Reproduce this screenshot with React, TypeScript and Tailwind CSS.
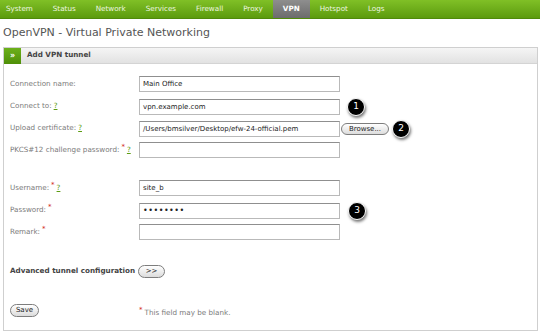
import type { ReactNode } from 'react';

const navItems = ['System', 'Status', 'Network', 'Services', 'Firewall', 'Proxy', 'VPN', 'Hotspot', 'Logs'];

function Marker({ n }: { n: number }) {
  return (
    <span className="flex h-[18px] w-[18px] items-center justify-center rounded-full border border-white bg-black text-[9px] text-white shadow-[1px_2px_3px_rgba(0,0,0,0.55)]">
      {n}
    </span>
  );
}

function Req() {
  return <span className="relative top-[-3px] ml-[2px] text-[7px] text-[#d0250f]">*</span>;
}

function Help() {
  return <span className="ml-[2px] text-[#5c9c12] underline">?</span>;
}

function Field({ value, mono }: { value?: string; mono?: boolean }) {
  return (
    <div
      className={`flex h-[16px] w-[201px] items-center border border-[#b9b9b9] border-t-[#8f8f8f] bg-white pl-[3px] text-[#222] ${
        mono ? 'tracking-[0.5px] text-[8px]' : 'text-[7px]'
      }`}
    >
      {value}
    </div>
  );
}

function Row({ label, children, className = '' }: { label: ReactNode; children: ReactNode; className?: string }) {
  return (
    <div className={`flex h-[22px] items-start ${className}`}>
      <div className="flex h-[16px] w-[129px] items-center text-[#7a7a7a]">{label}</div>
      <div className="flex items-center">{children}</div>
    </div>
  );
}

export default function App() {
  return (
    <div className="h-[335px] w-[540px] bg-white font-['DejaVu_Sans',sans-serif] text-[7.2px]">
      {/* Top navigation */}
      <div className="flex h-[19px] items-stretch border-b border-[#4f8a0a] bg-gradient-to-b from-[#80c026] to-[#5c9b0d]">
        {navItems.map((item, i) => (
          <div
            key={item}
            className={`flex items-center ${i === 0 ? 'pl-[6px] pr-[10px]' : 'px-[10px]'} ${
              item === 'VPN'
                ? 'bg-gradient-to-b from-[#8e8e8e] to-[#6c6c6c] font-bold text-white'
                : 'text-[#eef7e0]'
            }`}
          >
            {item}
          </div>
        ))}
      </div>

      {/* Title */}
      <div className="flex h-[28px] items-center pl-[3px] pt-[1px] text-[11px] text-[#555]">
        OpenVPN - Virtual Private Networking
      </div>

      {/* Panel */}
      <div className="ml-[3px] h-[284px] w-[535px] border border-[#cfcfcf]">
        <div className="flex h-[16px] items-center border-b border-[#d4d4d4] bg-gradient-to-b from-[#f5f5f5] to-[#e2e2e2]">
          <div className="flex h-[16px] w-[17px] items-center justify-center bg-gradient-to-b from-[#6cb01a] to-[#4f8f08] text-[8px] font-bold text-white">
            »
          </div>
          <span className="ml-[6px] font-bold text-[#444]">Add VPN tunnel</span>
        </div>

        <div className="pl-[6px] pt-[12px]">
          <Row label="Connection name:">
            <Field value="Main Office" />
          </Row>
          <Row label={<>Connect to:<Help /></>}>
            <Field value="vpn.example.com" />
            <span className="ml-[7px]"><Marker n={1} /></span>
          </Row>
          <Row label={<>Upload certificate:<Help /></>}>
            <Field value="/Users/bmsilver/Desktop/efw-24-official.pem" />
            <span className="ml-[1px] flex h-[12px] w-[48px] items-center justify-center rounded-full border border-[#7d7d7d] bg-gradient-to-b from-white to-[#dcdcdc] text-[7px] text-[#222]">
              Browse...
            </span>
            <span className="ml-[3px]"><Marker n={2} /></span>
          </Row>
          <Row label={<>PKCS#12 challenge password:<Req /><Help /></>}>
            <Field />
          </Row>

          <Row className="mt-[16px]" label={<>Username:<Req /><Help /></>}>
            <Field value="site_b" />
          </Row>
          <Row label={<>Password:<Req /></>}>
            <Field value="••••••••" mono />
            <span className="ml-[8px]"><Marker n={3} /></span>
          </Row>
          <Row label={<>Remark:<Req /></>}>
            <Field />
          </Row>

          <div className="mt-[19px] flex items-center">
            <span className="font-bold text-[#444]">Advanced tunnel configuration</span>
            <span className="ml-[3px] flex h-[13px] w-[27px] items-center justify-center rounded-full border border-[#7d7d7d] bg-gradient-to-b from-white to-[#dcdcdc] text-[7px] text-[#222]">
              &gt;&gt;
            </span>
          </div>

          <div className="mt-[24px] flex items-center">
            <span className="flex h-[13px] w-[29px] items-center justify-center rounded-full border border-[#7d7d7d] bg-gradient-to-b from-white to-[#dcdcdc] text-[7px] text-[#222]">
              Save
            </span>
            <span className="ml-[100px] mt-[6px] text-[#7a7a7a]">
              <span className="relative top-[-3px] mr-[2px] text-[7px] text-[#d0250f]">*</span>This field may be blank.
            </span>
          </div>
        </div>
      </div>
    </div>
  );
}
